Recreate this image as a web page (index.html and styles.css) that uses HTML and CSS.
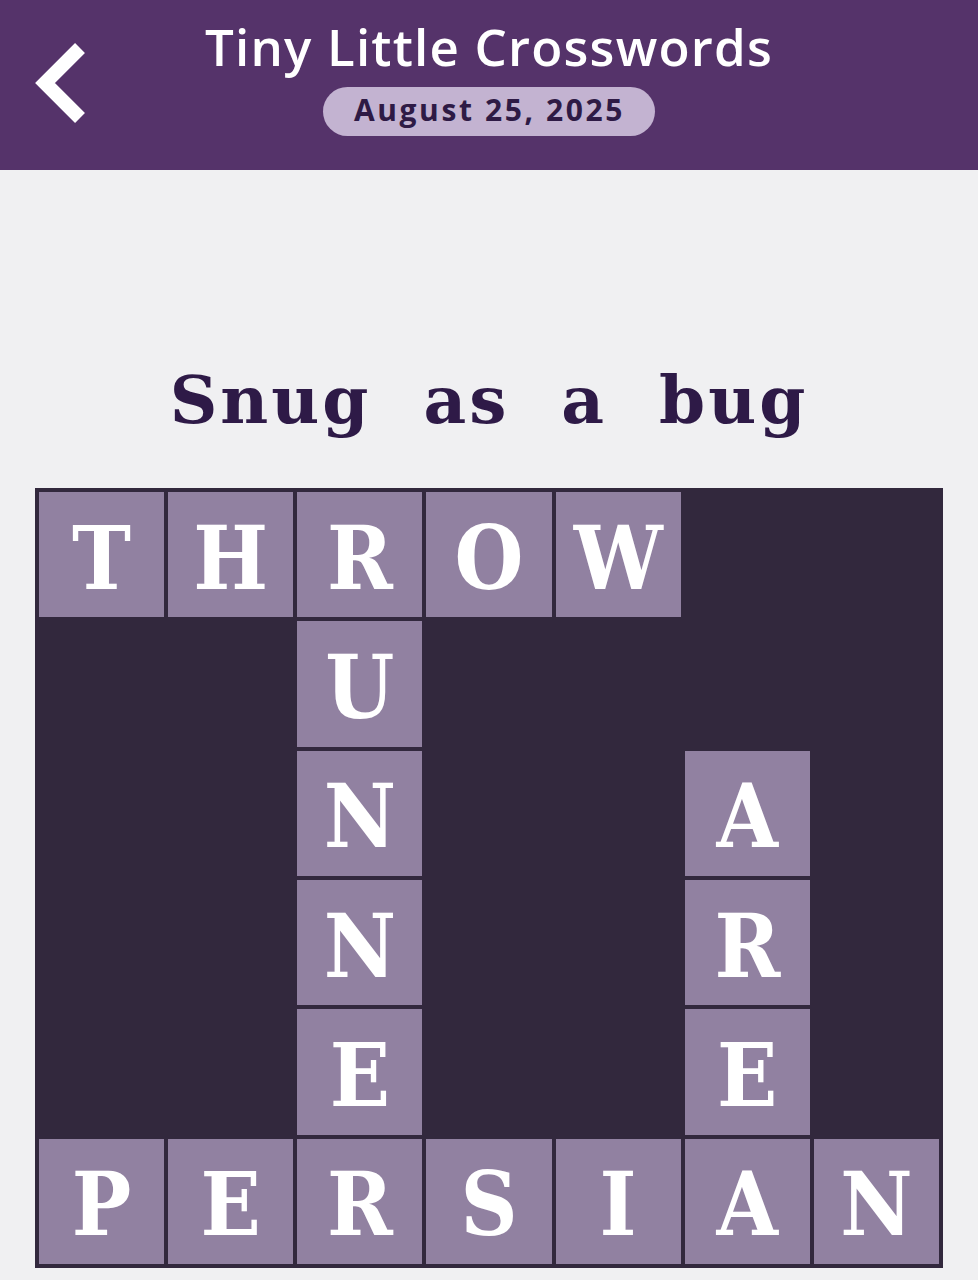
FILE: index.html
```html
<!DOCTYPE html>
<html lang="en">
<head>
<meta charset="utf-8">
<title>Tiny Little Crosswords</title>
<link rel="stylesheet" href="styles.css">
</head>
<body>
<header class="topbar">
  <button class="back" aria-label="Back">
    <svg class="back-icon" viewBox="0 0 60 90" width="60" height="90" aria-hidden="true">
      <polyline points="50,8 15,43 50,78" fill="none" stroke="#ffffff" stroke-width="14" stroke-linejoin="miter" stroke-linecap="butt"/>
    </svg>
  </button>
  <div class="heading">
    <h1 class="app-title">Tiny Little Crosswords</h1>
    <div class="date-pill">August 25, 2025</div>
  </div>
  <div class="spacer"></div>
</header>

<main class="puzzle">
  <h2 class="clue-title">Snug as a bug</h2>
  <div class="board">
    <div class="cell">T</div><div class="cell">H</div><div class="cell">R</div><div class="cell">O</div><div class="cell">W</div><div class="block"></div><div class="block"></div>
    <div class="block"></div><div class="block"></div><div class="cell">U</div><div class="block"></div><div class="block"></div><div class="block"></div><div class="block"></div>
    <div class="block"></div><div class="block"></div><div class="cell">N</div><div class="block"></div><div class="block"></div><div class="cell">A</div><div class="block"></div>
    <div class="block"></div><div class="block"></div><div class="cell">N</div><div class="block"></div><div class="block"></div><div class="cell">R</div><div class="block"></div>
    <div class="block"></div><div class="block"></div><div class="cell">E</div><div class="block"></div><div class="block"></div><div class="cell">E</div><div class="block"></div>
    <div class="cell">P</div><div class="cell">E</div><div class="cell">R</div><div class="cell">S</div><div class="cell">I</div><div class="cell">A</div><div class="cell">N</div>
  </div>
</main>
</body>
</html>
```

FILE: styles.css
```css
* {
  box-sizing: border-box;
}

html, body {
  margin: 0;
  padding: 0;
}

body {
  background: #f0f0f2;
  font-family: "Open Sans", "Lato", sans-serif;
  width: 978px;
  min-height: 1280px;
}

/* Top bar */
.topbar {
  height: 170px;
  background: #55336a;
  display: grid;
  grid-template-columns: 1fr auto 1fr;
  align-items: start;
}

.back {
  justify-self: start;
  margin: 40px 0 0 30px;
  padding: 0;
  border: 0;
  background: none;
  width: 60px;
  height: 90px;
  cursor: pointer;
}

.back-icon {
  display: block;
}

.heading {
  display: flex;
  flex-direction: column;
  align-items: center;
  padding-top: 16px;
}

.app-title {
  margin: 0;
  color: #ffffff;
  font-family: "Open Sans", "Lato", sans-serif;
  font-weight: 600;
  font-size: 51px;
  line-height: 1.2;
  letter-spacing: 1.2px;
  white-space: nowrap;
}

.date-pill {
  margin-top: 10px;
  height: 49px;
  padding: 5px 30px 8px 31px;
  border-radius: 25px;
  background: #c3b3d1;
  color: #2e1a45;
  font-weight: 700;
  font-size: 30px;
  line-height: 36px;
  letter-spacing: 2.6px;
  white-space: nowrap;
}

/* Puzzle */
.puzzle {
  padding-top: 191px;
}

.clue-title {
  margin: 0 0 48px;
  text-align: center;
  color: #2e1a47;
  font-family: "DejaVu Serif", "Liberation Serif", serif;
  font-weight: 700;
  font-size: 66px;
  line-height: 1.2;
  letter-spacing: 3px;
  word-spacing: 26px;
}

.board {
  width: 908px;
  margin: 0 auto;
  padding: 4px;
  gap: 4px;
  background: #32283d;
  display: grid;
  grid-template-columns: repeat(7, 1fr);
  grid-auto-rows: 125.3px;
}

.cell {
  background: #9181a1;
  color: #ffffff;
  display: flex;
  align-items: center;
  justify-content: center;
  padding-top: 6px;
  font-family: "DejaVu Serif", "Liberation Serif", serif;
  font-stretch: condensed;
  font-weight: 700;
  font-size: 88px;
  line-height: 1;
}
```
